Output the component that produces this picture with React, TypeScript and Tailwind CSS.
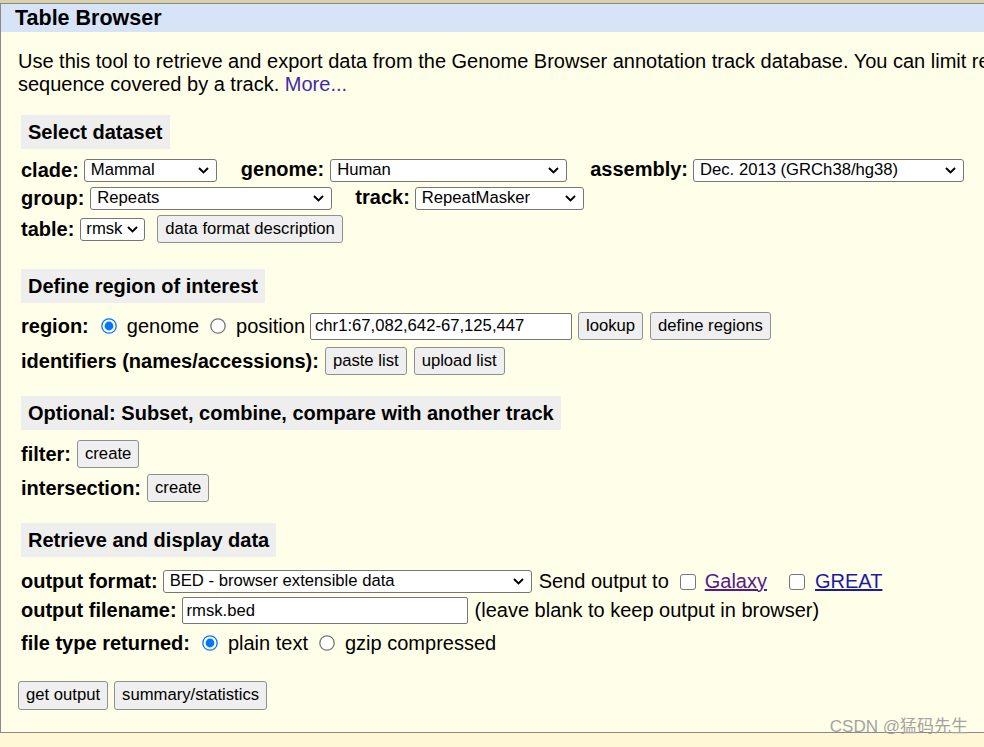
import React from "react";

// Table Browser form, drawn at the 125% scale of the reference

function Chevron() {
  return (
    <svg width="11" height="7" viewBox="0 0 11 7" className="shrink-0">
      <path d="M1 1l4.5 4.5L10 1" fill="none" stroke="#000" strokeWidth="1.9" />
    </svg>
  );
}

function Select({ text, className }: { text: string; className: string }) {
  return (
    <div
      className={
        "flex h-[23px] shrink-0 items-center justify-between rounded-[3px] border border-[#767676] bg-white pl-[6px] pr-[7px] text-[16.67px] leading-none " +
        className
      }
    >
      <span className="whitespace-nowrap">{text}</span>
      <Chevron />
    </div>
  );
}

function Btn({ children, className = "" }: { children: React.ReactNode; className?: string }) {
  return (
    <button
      className={
        "h-[28px] shrink-0 rounded-[3px] border border-[#8f8f8f] bg-[#efefef] px-[7px] text-[16.67px] leading-none text-black " +
        className
      }
    >
      {children}
    </button>
  );
}

function Radio({ checked }: { checked?: boolean }) {
  return (
    <svg width="16" height="16" viewBox="0 0 16 16" className="shrink-0">
      <circle cx="8" cy="8" r="7.2" fill="#fff" stroke={checked ? "#0075ff" : "#767676"} strokeWidth="1.3" />
      {checked && <circle cx="8" cy="8" r="4.4" fill="#0075ff" />}
    </svg>
  );
}

function Checkbox() {
  return <span className="inline-block h-[16px] w-[16px] shrink-0 rounded-[3px] border border-[#767676] bg-white" />;
}

function SectionHead({ children }: { children: React.ReactNode }) {
  return (
    <div className="flex h-[34px] items-center self-start bg-[#eeeeee] px-[7px] text-[20px] font-bold">
      {children}
    </div>
  );
}

function Label({ children }: { children: React.ReactNode }) {
  return <span className="shrink-0 whitespace-nowrap text-[20px] font-bold leading-[23px]">{children}</span>;
}

export default function App() {
  return (
    <div className="relative h-[747px] w-[984px] overflow-hidden bg-[#fff7d6] font-['Liberation_Sans',Arial,sans-serif] text-black">
      <div className="h-[3px] bg-[#d9d1a9]" />
      <div className="w-[1200px] border-y border-l border-[#8a8a8a] bg-[#fffee8]">
        <div className="flex h-[28px] items-center bg-[#d7e3f7] pl-[14px] text-[21.5px] font-bold">
          Table Browser
        </div>

        <div className="flex flex-col pb-[22px] pl-[17px]">
          <p className="mt-[18px] whitespace-nowrap text-[20px] leading-[23px]">
            Use this tool to retrieve and export data from the Genome Browser annotation track database. You can limit retrieval based on data attributes and intersect or merge with data from another track, or retrieve DNA
            <br />
            sequence covered by a track. <span className="text-[#3f2aa8]">More...</span>
          </p>

          <div className="ml-[3px] flex flex-col">
            <div className="mt-[19px] flex">
              <SectionHead>Select dataset</SectionHead>
            </div>

            <div className="mt-[10px] flex h-[23px] items-center">
              <Label>clade:</Label>
              <Select text="Mammal" className="ml-[5px] w-[133px]" />
              <span className="ml-[24px]"><Label>genome:</Label></span>
              <Select text="Human" className="ml-[6px] w-[237px]" />
              <span className="ml-[23px]"><Label>assembly:</Label></span>
              <Select text="Dec. 2013 (GRCh38/hg38)" className="ml-[5px] w-[271px]" />
            </div>

            <div className="mt-[5px] flex h-[23px] items-center">
              <Label>group:</Label>
              <Select text="Repeats" className="ml-[6px] w-[242px]" />
              <span className="ml-[23px]"><Label>track:</Label></span>
              <Select text="RepeatMasker" className="ml-[5px] w-[169px]" />
            </div>

            <div className="mt-[5px] flex h-[28px] items-center">
              <Label>table:</Label>
              <Select text="rmsk" className="ml-[6px] w-[65px] !pl-[5px] !pr-[6px]" />
              <Btn className="ml-[12px]">data format description</Btn>
            </div>

            <div className="mt-[26px] flex">
              <SectionHead>Define region of interest</SectionHead>
            </div>

            <div className="mt-[9px] flex h-[28px] items-center text-[20px] leading-[23px]">
              <Label>region:</Label>
              <span className="ml-[12px]"><Radio checked /></span>
              <span className="ml-[10px]">genome</span>
              <span className="ml-[11px]"><Radio /></span>
              <span className="ml-[10px]">position</span>
              <input
                readOnly
                defaultValue="chr1:67,082,642-67,125,447"
                className="ml-[5px] h-[27px] w-[262px] rounded-[2px] border border-[#767676] bg-white px-[4px] text-[16.67px] outline-none"
              />
              <Btn className="ml-[6px]">lookup</Btn>
              <Btn className="ml-[7px]">define regions</Btn>
            </div>

            <div className="mt-[7px] flex h-[28px] items-center">
              <Label>identifiers (names/accessions):</Label>
              <Btn className="ml-[6px]">paste list</Btn>
              <Btn className="ml-[7px]">upload list</Btn>
            </div>

            <div className="mt-[21px] flex">
              <SectionHead>Optional: Subset, combine, compare with another track</SectionHead>
            </div>

            <div className="mt-[10px] flex h-[28px] items-center">
              <Label>filter:</Label>
              <Btn className="ml-[6px]">create</Btn>
            </div>

            <div className="mt-[6px] flex h-[28px] items-center">
              <Label>intersection:</Label>
              <Btn className="ml-[6px]">create</Btn>
            </div>

            <div className="mt-[21px] flex">
              <SectionHead>Retrieve and display data</SectionHead>
            </div>

            <div className="mt-[13px] flex h-[23px] items-center text-[20px] leading-[23px]">
              <Label>output format:</Label>
              <Select text="BED - browser extensible data" className="ml-[5px] w-[369px]" />
              <span className="ml-[7px] whitespace-nowrap">Send output to</span>
              <span className="ml-[11px] flex"><Checkbox /></span>
              <span className="ml-[9px] text-[#551a8b] underline">Galaxy</span>
              <span className="ml-[22px] flex"><Checkbox /></span>
              <span className="ml-[10px] text-[#1a1aa6] underline">GREAT</span>
            </div>

            <div className="mt-[4px] flex h-[27px] items-center text-[20px] leading-[23px]">
              <Label>output filename:</Label>
              <input
                readOnly
                defaultValue="rmsk.bed"
                className="ml-[5px] h-[27px] w-[286px] rounded-[2px] border border-[#767676] bg-white px-[4px] text-[16.67px] outline-none"
              />
              <span className="ml-[7px] whitespace-nowrap">(leave blank to keep output in browser)</span>
            </div>

            <div className="mt-[7px] flex h-[24px] items-center text-[20px] leading-[23px]">
              <Label>file type returned:</Label>
              <span className="ml-[12px]"><Radio checked /></span>
              <span className="ml-[10px]">plain text</span>
              <span className="ml-[11px]"><Radio /></span>
              <span className="ml-[10px]">gzip compressed</span>
            </div>
          </div>

          <div className="mt-[26px] flex h-[29px] items-center">
            <Btn className="h-[29px]">get output</Btn>
            <Btn className="ml-[6px] h-[29px]">summary/statistics</Btn>
          </div>
        </div>
      </div>

      <span className="absolute bottom-[8px] right-[16px] whitespace-nowrap font-['Liberation_Sans','Noto_Sans_CJK_SC',sans-serif] text-[17px] text-[#a3a3a3]">
        CSDN @猛码先生
      </span>
    </div>
  );
}
